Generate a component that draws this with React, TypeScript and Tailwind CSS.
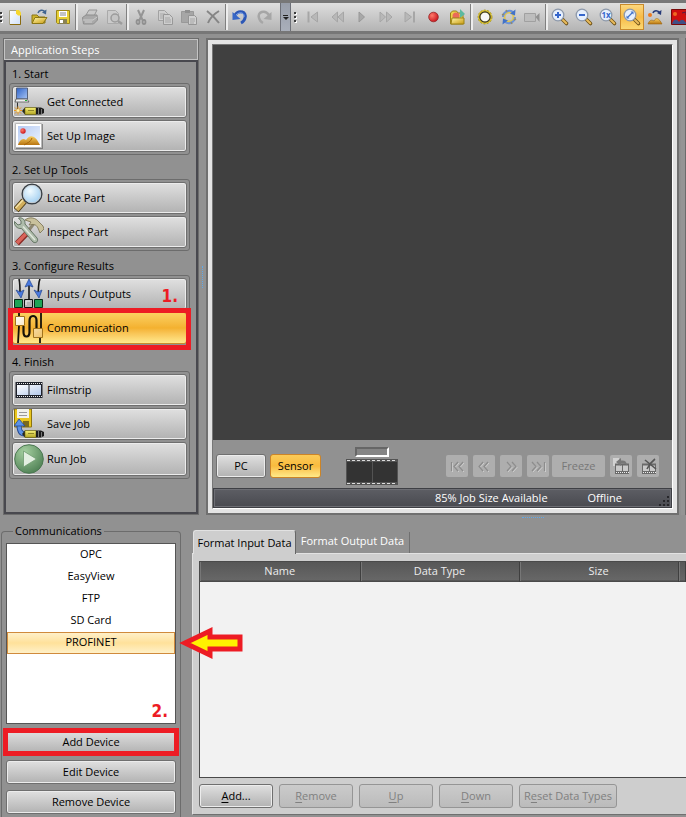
import type { ReactNode } from "react";

const BTN =
  "border border-[#6f6f6f] rounded-[3px] bg-gradient-to-b from-[#e0e0e0] to-[#b2b2b2] shadow-[inset_0_0_0_1px_#ececec]";

/* ---------- small toolbar drawings, 20 x 20 ---------- */

function Svg({ children, s = 20 }: { children: ReactNode; s?: number }) {
  return (
    <svg width={s} height={s} viewBox={`0 0 ${s} ${s}`} fill="none" aria-hidden="true" className="block shrink-0">
      {children}
    </svg>
  );
}

function Defs() {
  return (
    <svg width="0" height="0" className="absolute" aria-hidden="true">
      <defs>
        <linearGradient id="gold" x1="0" y1="0" x2="1" y2="1">
          <stop offset="0" stopColor="#fff6a8" />
          <stop offset="1" stopColor="#c99a10" />
        </linearGradient>
        <linearGradient id="yel" x1="0" y1="0" x2="0" y2="1">
          <stop offset="0" stopColor="#f6f07a" />
          <stop offset="1" stopColor="#b3a522" />
        </linearGradient>
        <linearGradient id="blu" x1="0" y1="0" x2="1" y2="1">
          <stop offset="0" stopColor="#2d62c8" />
          <stop offset="1" stopColor="#a9c5f4" />
        </linearGradient>
        <linearGradient id="sky" x1="0" y1="0" x2="1" y2="1">
          <stop offset="0" stopColor="#b5cbf3" />
          <stop offset="1" stopColor="#eef4ff" />
        </linearGradient>
        <linearGradient id="dune" x1="0" y1="0" x2="0" y2="1">
          <stop offset="0" stopColor="#f8cf62" />
          <stop offset="1" stopColor="#b87410" />
        </linearGradient>
        <linearGradient id="film" x1="0" y1="0" x2="1" y2="1">
          <stop offset="0" stopColor="#ffffff" />
          <stop offset="1" stopColor="#b4c9ec" />
        </linearGradient>
        <linearGradient id="page" x1="0" y1="0" x2="1" y2="1">
          <stop offset="0" stopColor="#ffffff" />
          <stop offset="1" stopColor="#cfe0fa" />
        </linearGradient>
        <linearGradient id="cube" x1="0" y1="0" x2="1" y2="1">
          <stop offset="0" stopColor="#ffffff" />
          <stop offset="1" stopColor="#f0c46a" />
        </linearGradient>
        <radialGradient id="lens" cx="0.4" cy="0.35" r="0.7">
          <stop offset="0" stopColor="#f2fbff" />
          <stop offset="1" stopColor="#9cccf0" />
        </radialGradient>
        <radialGradient id="red" cx="0.35" cy="0.35" r="0.7">
          <stop offset="0" stopColor="#ff7a6a" />
          <stop offset="1" stopColor="#c8141c" />
        </radialGradient>
        <radialGradient id="green" cx="0.35" cy="0.25" r="0.85">
          <stop offset="0" stopColor="#a5cfa0" />
          <stop offset="1" stopColor="#4a7c50" />
        </radialGradient>
      </defs>
    </svg>
  );
}

function Magnifier({ children }: { children: ReactNode }) {
  return (
    <Svg>
      <path d="M12.5 12.5 16.500 16.500" stroke="#6e5218" strokeWidth="3.600" strokeLinecap="round" />
      <path d="M13 13 16.3 16.3" stroke="#e9bb5c" strokeWidth="2" strokeLinecap="round" />
      <circle cx="8" cy="8" r="5.800" fill="#e6effd" stroke="#8d99ab" strokeWidth="1.3" />
      {children}
    </Svg>
  );
}

const icons: Record<string, ReactNode> = {
  New: (
    <Svg>
      <path d="M4.500 3.500h8l3 3v11h-11z" fill="url(#page)" stroke="#a3a08a" />
      <path d="M15.500 6v11.500H5" stroke="#8a6b10" />
      <path d="M11 3h3l2 2.500v3h-3l-2-2z" fill="#f5d730" />
    </Svg>
  ),
  Open: (
    <Svg>
      <path d="M3 16V8h5l2 2h6v6z" fill="#cfb42a" stroke="#8c7715" />
      <path d="m3 16.500 3-6h12l-4 6z" fill="url(#gold)" stroke="#8c7715" />
      <path d="M9 6c1-3 5-4 7-1" stroke="#3f6390" strokeWidth="1.500" />
      <path d="m17.500 2.500-.5 5-4-2z" fill="#3f6390" />
    </Svg>
  ),
  Save: (
    <Svg>
      <path d="M3.500 3.500h13v13h-12l-1-1z" fill="#e6cf35" stroke="#9b8618" />
      <path d="M6 4h8v6H6z" fill="#fff" />
      <path d="M7 6h6M7 8h6" stroke="#888" />
      <path d="M6 12h8v5H6z" fill="#8a8252" />
      <path d="M7 13h3v3H7z" fill="#fff" />
    </Svg>
  ),
  Print: (
    <Svg>
      <path d="m6 8 3-5h8l-3 6z" fill="#c9c9c9" stroke="#969696" />
      <path d="M2.500 10.500 6 8h11l.5 5-4 4h-10z" fill="#a9a9a9" stroke="#8e8e8e" />
      <path d="M3 13h10l4-3M5 15h7" stroke="#cdcdcd" />
    </Svg>
  ),
  "Print Preview": (
    <Svg>
      <path d="M3.500 3.500h8l3 3v10h-11z" fill="#cbcbcb" stroke="#aaa" />
      <circle cx="11" cy="11" r="4" fill="#c4c4c4" stroke="#9c9c9c" strokeWidth="1.500" />
      <path d="m14 14 4 3" stroke="#9c9c9c" strokeWidth="2.500" />
    </Svg>
  ),
  Cut: (
    <Svg>
      <path d="m7 3 4.500 10M13 3 8.500 13" stroke="#959595" strokeWidth="2" />
      <ellipse cx="7" cy="15" rx="1.500" ry="2" stroke="#909090" strokeWidth="1.800" />
      <ellipse cx="13" cy="15" rx="1.500" ry="2" stroke="#909090" strokeWidth="1.800" />
    </Svg>
  ),
  Copy: (
    <Svg>
      <path d="M3.500 3.500h6l3 3v7h-9z" fill="#cecece" stroke="#a2a2a2" />
      <path d="M5 7h5M5 9h5M5 11h3" stroke="#a8a8a8" />
      <path d="M8.500 7.500h6l3 3v7h-9z" fill="#cecece" stroke="#989898" />
      <path d="M10 11h5M10 13h6M10 15h6" stroke="#a6a6a6" />
    </Svg>
  ),
  Paste: (
    <Svg>
      <path d="M2.500 4.500h12v11h-12z" fill="#a6a6a6" stroke="#999" />
      <path d="M6 3h5v3H6z" fill="#8f8f8f" />
      <path d="M9.500 8.500h6l2 2v7h-8z" fill="#d0d0d0" stroke="#959595" />
      <path d="M11 12h5M11 14h5M11 16h4" stroke="#a6a6a6" />
    </Svg>
  ),
  Delete: (
    <Svg>
      <path d="M4 4c4 3 8 7 12 12M16 4C11 7 7 11 5 16" stroke="#858585" strokeWidth="2" />
    </Svg>
  ),
  Undo: (
    <Svg>
      <path d="M5 8c4-6 12-3 10 3-.5 2-2 4-4 5" stroke="#2c57b6" strokeWidth="3" />
      <path d="M6 8c4-4 9-2 8 2" stroke="#7fa5ee" />
      <path d="M2.500 5v8l8-1z" fill="#3767c6" />
    </Svg>
  ),
  Redo: (
    <Svg>
      <path d="M15 8C11 2 3 5 5 11c.5 2 2 4 4 5" stroke="#a6a6a6" strokeWidth="2.500" />
      <path d="M17.500 5v8l-8-1z" fill="#a6a6a6" />
    </Svg>
  ),
  First: (
    <Svg>
      <path d="M4.500 4.500v11" stroke="#a6a6a6" strokeWidth="2" />
      <path d="M13.500 5v10L7 10z" fill="#b8b8b8" stroke="#a6a6a6" />
    </Svg>
  ),
  Previous: (
    <Svg>
      <path d="M9.500 5v10L4 10zM15.500 5v10L10 10z" fill="#b8b8b8" stroke="#a6a6a6" />
    </Svg>
  ),
  Play: (
    <Svg>
      <path d="M7 5v10l5.500-5z" fill="#a8a8a8" stroke="#989898" />
    </Svg>
  ),
  Next: (
    <Svg>
      <path d="M4 5v10l5.500-5zM10.500 5v10l5.500-5z" fill="#b8b8b8" stroke="#a6a6a6" />
    </Svg>
  ),
  Last: (
    <Svg>
      <path d="M14 4.500v11" stroke="#a6a6a6" strokeWidth="2" />
      <path d="M5 5v10l6.500-5z" fill="#b8b8b8" stroke="#a6a6a6" />
    </Svg>
  ),
  Record: (
    <Svg>
      <circle cx="9.500" cy="10" r="4.800" fill="url(#red)" stroke="#96282a" strokeWidth=".8" />
    </Svg>
  ),
  "Open Recording": (
    <Svg>
      <path d="M2.500 17V6l2-2h4l1.500 2H15v11z" fill="#ecd24a" stroke="#9b8216" />
      <circle cx="8" cy="9" r="3.500" fill="#ea6a58" />
      <path d="M12 2v9l5-4z" fill="#5cb9a0" />
      <path d="M4 11h12v6H3z" fill="url(#gold)" stroke="#9b8216" />
    </Svg>
  ),
  "Live Light": (
    <Svg>
      <circle cx="10" cy="10" r="5.800" fill="#f7f7f7" stroke="#e4ca25" strokeWidth="2.600" />
      <circle cx="10" cy="10" r="5.200" stroke="#333" strokeWidth="1.200" />
      <circle cx="10" cy="10" r="7" stroke="#a08c1c" strokeWidth=".8" strokeDasharray="2 1.500" />
    </Svg>
  ),
  Refresh: (
    <Svg>
      <circle cx="10" cy="10" r="4.500" stroke="#dcc55a" strokeWidth="2" />
      <path d="M4 10c0-5 6-8 10-5M16 10c0 5-6 8-10 5" stroke="#6b93d8" strokeWidth="2" />
      <path d="m16.500 2.500-.5 6-5-2zM3.500 17.500l.5-6 5 2z" fill="#4272c8" />
      <path d="m3 8 2-1M15 13l2-1M7 3l1 2M12 15l1 2" stroke="#8f8a70" strokeWidth="1.500" />
    </Svg>
  ),
  Camera: (
    <Svg>
      <path d="M1.500 6.500h11v8h-11z" fill="#bdbdbd" stroke="#a0a0a0" />
      <path d="m12.500 10 4-4v9z" fill="#919191" />
    </Svg>
  ),
  "Zoom In": (
    <Magnifier>
      <path d="M8 5v6M5 8h6" stroke="#3566cc" strokeWidth="2" />
    </Magnifier>
  ),
  "Zoom Out": (
    <Magnifier>
      <path d="M5 8h6" stroke="#3566cc" strokeWidth="2" />
    </Magnifier>
  ),
  "Zoom 1x": (
    <Magnifier>
      <text x="3.500" y="11" fill="#3566cc" fontSize="8" fontWeight="bold">
        1x
      </text>
    </Magnifier>
  ),
  "Zoom to Fit": (
    <Magnifier>
      <path d="m5.500 10.500 5-5" stroke="#4272c8" strokeWidth="1.300" />
      <path d="M8.500 4.500h3v3zM7.500 11.500h-3v-3z" fill="#4272c8" />
    </Magnifier>
  ),
  "Rotate Image": (
    <Svg>
      <circle cx="4" cy="8" r="2" fill="#ef7a1c" />
      <path d="M7 6c1-3 5-3 7 0" stroke="#263a78" strokeWidth="1.500" />
      <path d="m15.500 3-.5 5-4-2z" fill="#263a78" />
      <path d="M2 17c1-3 3-5 6-3 2-4 5-3 8 3z" fill="url(#dune)" stroke="#9a6412" strokeWidth=".6" />
    </Svg>
  ),
  "Color Image": (
    <Svg>
      <path d="M1.500 2.500h17v15h-17z" fill="#cf1010" stroke="#7a0a0a" />
      <circle cx="5" cy="7" r="2" fill="#ef6a20" />
      <path d="M2 17c2-6 5-5 7-2 3-4 5-2 8 2z" fill="#3f4f86" />
      <path d="m12 6 4-1v3" stroke="#5a1a40" />
    </Svg>
  ),
};

/* ---------- step drawings, 30 x 30 ---------- */

function Sensor({ y }: { y: number }) {
  return (
    <g transform={`translate(0 ${y})`}>
      <path d="M8 4 11 .5h11v7H11z" fill="#27271c" />
      <path d="M11 .5h11v7H11z" fill="url(#yel)" stroke="#6b6418" strokeWidth=".6" />
      <path d="M14 3.500h6" stroke="#8e8528" />
      <path d="M22 .5h5l3 1.500v4L27 7.500h-5z" fill="#1c1c1c" />
      <path d="M24.500 1v6M27.500 2v5" stroke="#777" />
    </g>
  );
}

const steps: Record<string, ReactNode> = {
  connect: (
    <Svg s={30}>
      <path d="M2.500 1h11v11h-11z" fill="url(#blu)" stroke="#55617c" />
      <path d="M2 12h11l2 3H1z" fill="#eee" stroke="#555" strokeWidth=".8" />
      <path d="M11 13.500h2" stroke="#1fae36" />
      <path d="M3.500 15.500V25" stroke="#333" />
      <Sensor y={20} />
      <path d="M4 19.500v8M0 23.500h8M1 20.500l6 6M7 20.500l-6 6" stroke="#ee9b1b" />
      <circle cx="4" cy="23.500" r="1.500" fill="#fff3b0" />
    </Svg>
  ),
  image: (
    <Svg s={30}>
      <path d="M2 3h27v25H2z" fill="#585858" opacity=".6" />
      <path d="M1.500 2.500h26v24h-26z" fill="#fff" stroke="#b9b9b9" />
      <path d="M4 5h22v19H4z" fill="url(#sky)" />
      <circle cx="9" cy="10" r="2.700" fill="url(#red)" />
      <path d="M4 24c1-3 4-8 8-5 4-7 10-4 14 5z" fill="url(#dune)" />
      <path d="M10 24c3-2 7-3 8-7" stroke="#a7660a" />
    </Svg>
  ),
  locate: (
    <Svg s={30}>
      <path d="M10 18 2 27" stroke="#4c3a14" strokeWidth="7" />
      <path d="M10 18 2.500 26.500" stroke="#d1ae5c" strokeWidth="5" />
      <path d="m9 17-7.500 8" stroke="#f4e2a6" strokeWidth="1.500" />
      <circle cx="18" cy="11" r="9.800" fill="url(#lens)" stroke="#393f45" strokeWidth="1.500" />
      <circle cx="18" cy="11" r="8.700" stroke="#c4ccd2" />
    </Svg>
  ),
  inspect: (
    <Svg s={30}>
      <path d="m15 13 6-8" stroke="#8e8871" strokeWidth="3" />
      <path d="M11 3c5-4 11-2 14 2l4 4 1 3-4 4-2-5c-2-4-5-4-9-3l2-3z" fill="#c9c19c" stroke="#77704f" strokeWidth=".8" />
      <path d="M3 26.500 16 13" stroke="#8a2a25" strokeWidth="5.500" />
      <path d="M3 26 16 12.500" stroke="#d9645a" strokeWidth="3.500" />
      <path d="M.5 4.500 4 8l3-1V4L4.500 1c4-1 7 2 6.500 6l12 14c2 3-1 6-4 4L7.500 11.500C3 12 0 8.500.5 4.500z" fill="#aebcab" stroke="#5c6d5c" strokeWidth=".9" />
      <path d="m9 9.500 12 13.500" stroke="#e0e8dd" strokeWidth="1.500" />
    </Svg>
  ),
  io: (
    <Svg s={30}>
      <path d="M5 0c1 4 1 8 1 14M26 0c-2 4-1 8-2 14M15 20V5" stroke="#161616" strokeWidth="1.600" />
      <path d="m2 11 4 2 4-2-3 8zM20 11l4 2 4-2-3 8zM11 8l4-8 4 8-4-1.500z" fill="#4b7be0" stroke="#24458f" strokeWidth=".7" />
      <path d="M.5 20.500h8v8h-8zM20.500 20.500h8v8h-8z" fill="#1ea556" stroke="#0a2a16" />
      <path d="M10.500 20.500h8v8h-8z" fill="#b5b5b5" stroke="#111" />
      <path d="M12 26v-4h4" stroke="#eee" />
    </Svg>
  ),
  comm: (
    <Svg s={30}>
      <path d="M5 0v5M5 13 4 30M27 0v15M26 25v5" stroke="#161208" strokeWidth="1.800" />
      <path d="M9.500 13v6c0 6 6 6 6 0V8c0-7 7-6 7-1v8" stroke="#161208" strokeWidth="2.200" />
      <path d="M1.500 3.500h9v9h-9zM19.500 15.500h9v9h-9z" fill="url(#cube)" stroke="#a1741c" />
    </Svg>
  ),
  film: (
    <Svg s={30}>
      <path d="M1.500 7h27v16h-27z" fill="#20232c" />
      <path d="M3 10h11.500v10H3zM15.500 10H27v10H15.500z" fill="url(#film)" />
      <path d="M3 8.500h25M3 21.500h25" stroke="#e9e9e9" strokeDasharray="1 1" />
    </Svg>
  ),
  save: (
    <Svg s={30}>
      <path d="M.5 0h17v18H.5z" fill="#e9c61e" stroke="#8c7410" />
      <path d="M3 0h12v9H3z" fill="#f2f2ea" />
      <path d="M5 3.500h8M5 6.500h8" stroke="#999" />
      <path d="M9 12h6v6H9z" fill="#7a6a1c" />
      <path d="M5 16c0 5 1 9 6 9" stroke="#23488f" strokeWidth="5" />
      <path d="M5 15c0 6 1 10 6 10" stroke="#5d92e6" strokeWidth="3.500" />
      <path d="m0 17 5-7 6 7z" fill="#5d92e6" stroke="#23488f" strokeWidth=".8" />
      <Sensor y={21} />
    </Svg>
  ),
  run: (
    <Svg s={30}>
      <circle cx="15" cy="15" r="14.300" fill="url(#green)" stroke="#4c7852" />
      <path d="M9.500 7v16L22.500 15z" fill="#e3efe1" stroke="#6f9a70" strokeWidth=".8" />
    </Svg>
  ),
};

/* ---------- toolbar ---------- */

function ToolBtn({ name, on = false }: { name: string; on?: boolean }) {
  return (
    <button
      type="button"
      aria-label={name}
      className={
        "flex h-[26px] w-6 shrink-0 items-center justify-center " +
        (on ? "border border-[#c98a2b] bg-gradient-to-b from-[#fcd77c] via-[#f8bb45] to-[#fbd973]" : "")
      }
    >
      {icons[name]}
    </button>
  );
}

function Sep() {
  return <span className="h-[26px] w-[3px] shrink-0 border-l border-[#808080] bg-[#ededed]" />;
}

function Grip() {
  return (
    <span className="flex w-[3px] shrink-0 flex-col gap-[2px]">
      {[0, 1, 2].map((i) => (
        <span key={i} className="h-[2px] w-[2px] bg-[#3c3c3c] shadow-[1px_1px_0_#fff]" />
      ))}
    </span>
  );
}

function Tools({ names }: { names: string[] }) {
  return (
    <>
      {names.map((n, i) => (n === "|" ? <Sep key={i} /> : <ToolBtn key={n} name={n} on={n === "Zoom to Fit"} />))}
    </>
  );
}

function Toolbar() {
  return (
    <header className="flex h-[34px] shrink-0 overflow-hidden border-y-[3px] border-[#777] bg-gradient-to-b from-[#dedede] to-[#b4b4b4]">
      <div className="flex shrink-0 items-center">
        <Grip />
        <div className="flex items-center">
          <Tools
            names={["New", "Open", "Save", "|", "Print", "Print Preview", "|", "Cut", "Copy", "Paste", "Delete", "|", "Undo", "Redo"]}
          />
        </div>
      </div>
      <button
        type="button"
        aria-label="More tools"
        className="ml-1 flex w-[11px] shrink-0 flex-col items-center justify-center gap-px border-x border-[#6d7078] bg-gradient-to-b from-[#989eaa] to-[#a9afba]"
      >
        <span className="h-px w-[5px] bg-[#222]" />
        <span className="h-0 w-0 border-x-[3px] border-t-[3px] border-x-transparent border-t-[#222]" />
      </button>
      <div className="flex items-center gap-[5px] pl-[3px]">
        <Grip />
        <div className="flex items-center">
          <Tools
            names={[
              "First", "Previous", "Play", "Next", "Last", "Record", "Open Recording", "|",
              "Live Light", "Refresh", "Camera", "|",
              "Zoom In", "Zoom Out", "Zoom 1x", "Zoom to Fit", "Rotate Image", "Color Image",
            ]}
          />
        </div>
      </div>
    </header>
  );
}

/* ---------- application steps ---------- */

const sections = [
  { title: "1. Start", items: [["Get Connected", "connect"], ["Set Up Image", "image"]] },
  { title: "2. Set Up Tools", items: [["Locate Part", "locate"], ["Inspect Part", "inspect"]] },
  { title: "3. Configure Results", items: [["Inputs / Outputs", "io"], ["Communication", "comm"]] },
  { title: "4. Finish", items: [["Filmstrip", "film"], ["Save Job", "save"], ["Run Job", "run"]] },
];

const MARK = "font-['DejaVu_Sans_Condensed','DejaVu_Sans',sans-serif] text-[17px] leading-5 font-bold text-[#ed1c24]";

function StepButton({ label, icon }: { label: string; icon: string }) {
  const on = icon === "comm";
  return (
    <div className="relative">
      <button
        type="button"
        className={
          "flex w-full items-center gap-[3px] pl-px text-left " +
          (icon === "run" ? "h-[34px] " : "h-8 ") +
          (on ? "rounded-[3px] border border-[#c98a2b] bg-gradient-to-b from-[#fbd160] via-[#f4b12f] to-[#ffe98c]" : BTN)
        }
      >
        {steps[icon]}
        {label}
      </button>
      {icon === "io" && <span className={MARK + " absolute top-2 right-[9px]"}>1.</span>}
      {on && <span className="pointer-events-none absolute -inset-x-1 -top-1 -bottom-[6px] z-10 border-[5px] border-[#ed1c24]" />}
    </div>
  );
}

function StepsPanel() {
  return (
    <aside className="flex w-[196px] shrink-0 flex-col border border-[#6c6c6c]">
      <h1 className="h-[21px] border border-[#c4c4c4] bg-[#909090] pl-[6px] leading-[19px] text-white">Application Steps</h1>
      <nav className="flex grow flex-col gap-[6px] border-2 border-[#48484e] px-[3px] pt-[3px]">
        {sections.map((s) => (
          <section key={s.title}>
            <h2 className="pl-[3px] leading-[18px]">{s.title}</h2>
            <div className="mr-[3px] flex flex-col gap-[2px] rounded-[3px] border border-[#6c6c6c] p-[2px]">
              {s.items.map(([label, icon]) => (
                <StepButton key={label} label={label} icon={icon} />
              ))}
            </div>
          </section>
        ))}
      </nav>
    </aside>
  );
}

/* ---------- image viewer ---------- */

function NavBtn({ label, children }: { label: string; children: ReactNode }) {
  return (
    <button type="button" disabled aria-label={label} className="flex h-[22px] w-[22px] items-center justify-center rounded-[2px] bg-[#aeaeae]">
      {children}
    </button>
  );
}

function Chevrons({ d }: { d: string }) {
  return (
    <Svg s={18}>
      <path d={d} stroke="#cfcfcf" transform="translate(1 2)" />
      <path d={d} stroke="#8c8c8c" strokeWidth="1.200" transform="translate(0 1)" />
    </Svg>
  );
}

function MiniFilm() {
  return (
    <>
      <path d="M3 6.500h14V17H3z" fill="#6a6a6a" />
      <path d="M4 8.500h6V14H4zM11 8.500h5V14h-5z" fill="#cacaca" />
      <path d="M4 15.500h13" stroke="#eee" strokeDasharray="1 1" />
    </>
  );
}

function Viewer() {
  return (
    <main className="flex min-w-0 grow flex-col border-2 border-[#707070] bg-[#e4e4e4] p-1">
      <div className="flex grow flex-col border border-t-[#777] border-r-white border-b-white border-l-[#777]">
        <div className="min-h-[395px] grow bg-[#404040]" />
        <div className="flex h-12 items-center gap-1 bg-[#919191] pt-1 pr-[13px] pl-[3px]">
          <button type="button" className={BTN + " h-6 w-[50px]"}>
            PC
          </button>
          <button
            type="button"
            className="h-6 w-[51px] rounded-[3px] border border-[#cc8427] bg-gradient-to-b from-[#fbcb58] via-[#f9bb3e] to-[#ffea88]"
          >
            Sensor
          </button>
          <div className="ml-[21px] flex flex-col items-center gap-[2px]">
            <div className="h-[10px] w-[34px] border-2 border-t-[#666] border-r-white border-b-white border-l-[#666] bg-[#858585]" />
            <svg width="52" height="26" viewBox="0 0 52 26" aria-hidden="true" className="block">
              <path d="M0 0h52v26H0z" fill="#535353" />
              <path d="M1 3h25v20H1zM27 3h24v20H27z" fill="#333" />
              <path d="M1 1.500h50M1 24.500h50" stroke="#ddd" strokeDasharray="3 2" />
            </svg>
          </div>
          <div className="ml-auto flex items-center gap-[5px]">
            <NavBtn label="First image">
              <Chevrons d="M3.500 4v9M10 4 6 8.500 10 13M15 4l-4 4.500 4 4.500" />
            </NavBtn>
            <NavBtn label="Previous image">
              <Chevrons d="M8 4 4 8.500 8 13M13 4 9 8.500 13 13" />
            </NavBtn>
            <NavBtn label="Next image">
              <Chevrons d="m5 4 4 4.500L5 13M10 4l4 4.500L10 13" />
            </NavBtn>
            <NavBtn label="Last image">
              <Chevrons d="m3 4 4 4.500L3 13M8 4l4 4.500L8 13M15.500 4v9" />
            </NavBtn>
            <button type="button" disabled className="-ml-[2px] h-[22px] w-[53px] rounded-[2px] bg-[#aeaeae] text-[#777]">
              Freeze
            </button>
            <NavBtn label="Restore images">
              <Svg s={18}>
                <path d="M1 1h6v6h8v9H3V9H1z" fill="#d2d2d2" />
                <MiniFilm />
                <path d="m4 5 5-4v2.500c4-.5 6 1.500 6 5C13 6.500 12 6.500 9 6.500V9z" fill="#777" />
              </Svg>
            </NavBtn>
            <NavBtn label="Clear images">
              <Svg s={18}>
                <MiniFilm />
                <path d="m6 3 11 9M16 2C12 5 10 8 8 12" stroke="#555" strokeWidth="1.600" />
              </Svg>
            </NavBtn>
          </div>
        </div>
        <div className="flex h-5 items-center justify-end border border-[#3e3f44] bg-gradient-to-b from-[#5d5e64] to-[#494a50] text-white shadow-[inset_0_0_0_1px_#6d6e74]">
          <span>85% Job Size Available</span>
          <span className="ml-10">Offline</span>
          <svg width="12" height="12" viewBox="0 0 12 12" aria-hidden="true" className="mr-px ml-9 self-end">
            <path d="M9 1h2v2H9zM5 5h2v2H5zM9 5h2v2H9zM1 9h2v2H1zM5 9h2v2H5zM9 9h2v2H9z" fill="#26262a" />
          </svg>
        </div>
      </div>
    </main>
  );
}

/* ---------- communications ---------- */

function Communications() {
  return (
    <fieldset className="ml-px w-[180px] shrink-0 rounded-t-[4px] border border-b-0 border-[#6c6c6c] px-1 pb-1">
      <legend className="ml-[7px] px-[2px] leading-[14px]">Communications</legend>
      <div className="relative mt-[5px]">
        <ul role="listbox" aria-label="Communications" className="h-[181px] border border-[#555] bg-white text-center leading-5">
          {["OPC", "EasyView", "FTP", "SD Card", "PROFINET"].map((n) => (
            <li
              key={n}
              role="option"
              aria-selected={n === "PROFINET"}
              className={
                n === "PROFINET"
                  ? "h-[22px] border border-[#d08a3c] bg-gradient-to-b from-[#fff0c8] via-[#ffe19a] to-[#fff0c8] leading-[18px]"
                  : "h-[22px]"
              }
            >
              {n}
            </li>
          ))}
        </ul>
        <span className={MARK + " absolute right-2 bottom-[3px]"}>2.</span>
        <svg width="66" height="32" viewBox="0 0 66 32" aria-hidden="true" className="absolute top-[84px] -right-[69px] z-10">
          <path d="M6 16 31 4v6h30v12H31v6z" fill="#fff200" stroke="#ed1c24" strokeWidth="5" />
        </svg>
      </div>
      <div className="mt-[6px] flex flex-col gap-[6px]">
        <div className="relative">
          <button type="button" className={BTN + " h-6 w-full"}>
            Add Device
          </button>
          <span className="pointer-events-none absolute -inset-x-[3px] -inset-y-[2px] border-[5px] border-[#ed1c24]" />
        </div>
        <button type="button" className={BTN + " h-6"}>
          Edit Device
        </button>
        <button type="button" className={BTN + " h-6"}>
          Remove Device
        </button>
      </div>
    </fieldset>
  );
}

/* ---------- format data ---------- */

function ActionBtn({ label, at, off = true, wide = false }: { label: string; at: number; off?: boolean; wide?: boolean }) {
  return (
    <button
      type="button"
      disabled={off}
      className={
        "h-6 shrink-0 " +
        (wide ? "w-[98px] " : "w-[74px] ") +
        (off ? "rounded-[3px] border border-[#959595] bg-gradient-to-b from-[#cbcbcb] to-[#bbbbbb] text-[#808080]" : BTN)
      }
    >
      {label.slice(0, at)}
      <u className="underline-offset-2">{label[at]}</u>
      {label.slice(at + 1)}
    </button>
  );
}

function FormatPanel() {
  const th = "h-[19px] border-r border-[#3f3f3f] p-0 font-normal shadow-[inset_1px_0_0_#777]";
  return (
    <section className="flex min-w-0 grow flex-col overflow-hidden">
      <div role="tablist" className="relative z-[1] flex items-end">
        <button
          type="button"
          role="tab"
          aria-selected="true"
          className="-mb-px ml-px h-6 w-[103px] rounded-t-[3px] border border-b-0 border-t-[#e2e2e2] border-r-[#666] border-l-[#e2e2e2] bg-[#cecece]"
        >
          Format Input Data
        </button>
        <button type="button" role="tab" aria-selected="false" className="h-[21px] w-[114px] border-r border-[#707070] pb-[3px] text-white">
          Format Output Data
        </button>
      </div>
      <div className="flex grow flex-col border border-r-0 border-t-[#e2e2e2] border-b-[#707070] border-l-[#e2e2e2] bg-[#cecece] pt-[7px] pb-[6px] pl-[6px]">
        <div className="grow border border-r-0 border-[#4a4a4a] bg-[#f2f2f2]">
          <table className="w-full table-fixed border-collapse">
            <colgroup>
              <col className="w-[160px]" />
              <col className="w-[159px]" />
              <col className="w-[159px]" />
              <col />
            </colgroup>
            <thead>
              <tr className="border-b border-[#4a4a4a] bg-gradient-to-b from-[#575757] to-[#676767] text-[#ececec]">
                <th className={th}>Name</th>
                <th className={th}>Data Type</th>
                <th className={th}>Size</th>
                <th className={th} aria-label="More" />
              </tr>
            </thead>
          </table>
        </div>
        <div className="mt-[6px] flex gap-[6px]">
          <ActionBtn label="Add..." at={0} off={false} />
          <ActionBtn label="Remove" at={0} />
          <ActionBtn label="Up" at={0} />
          <ActionBtn label="Down" at={0} />
          <ActionBtn label="Reset Data Types" at={1} wide />
        </div>
      </div>
    </section>
  );
}

export default function App() {
  return (
    <div className="flex min-h-screen flex-col overflow-hidden bg-[#919191] font-['Open_Sans','Noto_Sans',sans-serif] text-[11px] leading-[14px] text-black">
      <Defs />
      <Toolbar />
      <div className="mt-1 flex shrink-0 pl-[3px]">
        <StepsPanel />
        <div className="flex w-[7px] shrink-0 items-center justify-center">
          <span className="h-[22px] border-l border-dotted border-[#5fa8e8]" />
        </div>
        <Viewer />
        <div className="ml-[2px] w-[5px] shrink-0 border-r border-[#6c6c6c] bg-[#959595]" />
      </div>
      <div className="flex h-[9px] shrink-0 justify-center pt-[2px] pl-[380px]">
        <span className="w-[22px] border-t border-dotted border-[#5fa8e8]" />
      </div>
      <div className="flex grow">
        <Communications />
        <div className="mb-[3px] ml-[11px] flex min-w-0 grow pt-[6px]">
          <FormatPanel />
        </div>
      </div>
    </div>
  );
}
